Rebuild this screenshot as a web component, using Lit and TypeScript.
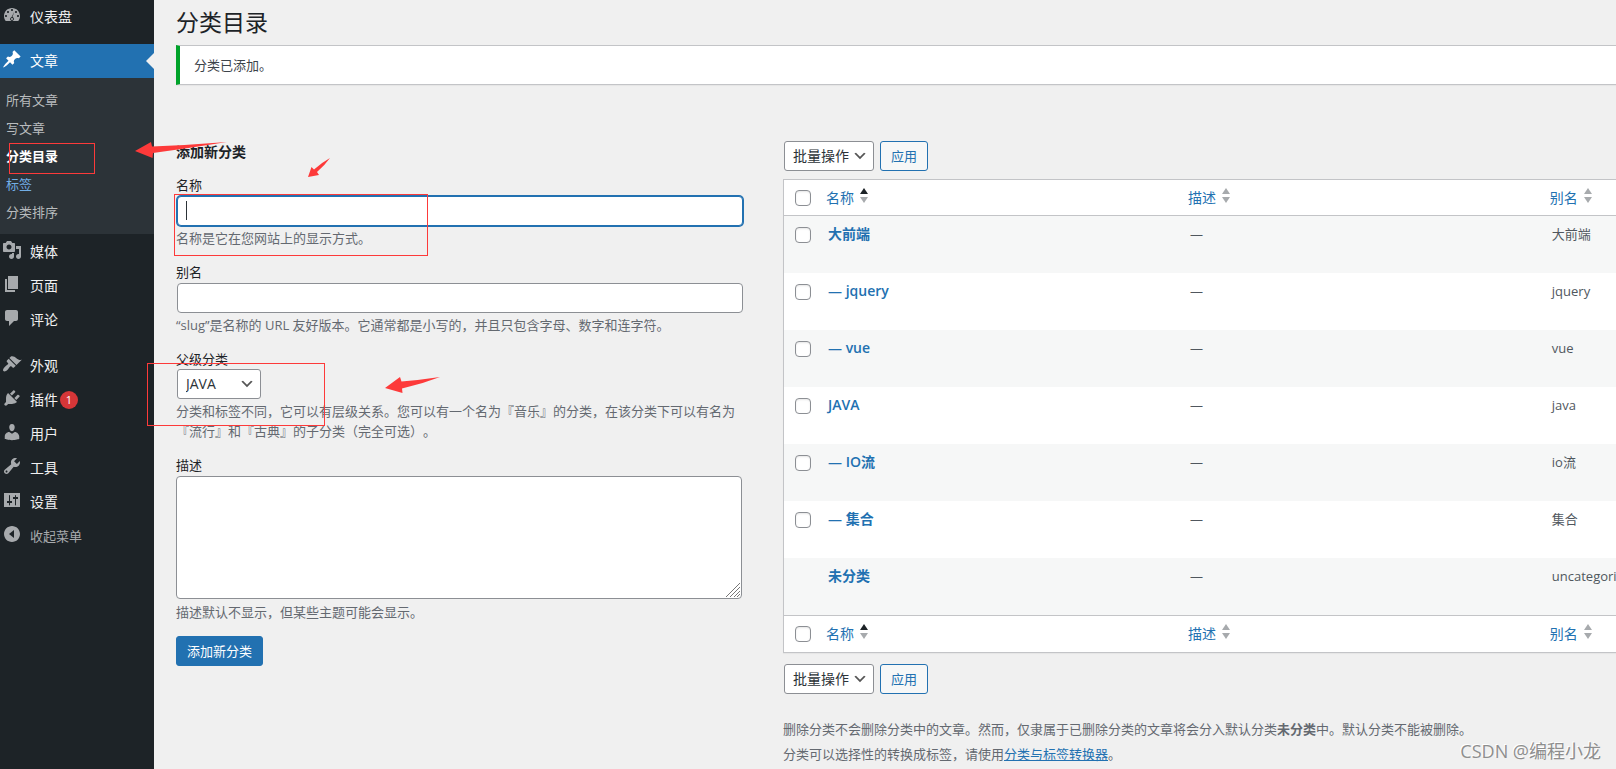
import { LitElement, html, css, svg, nothing } from "lit";
import { customElement, property } from "lit/decorators.js";
import { classMap } from "lit/directives/class-map.js";

const icons: Record<string, string> = {
  dashboard:
    "M3.76 16h12.48c1.1-1.37 1.76-3.11 1.76-5 0-4.42-3.58-8-8-8s-8 3.58-8 8c0 1.89.66 3.63 1.76 5zM10 4c.55 0 1 .45 1 1s-.45 1-1 1-1-.45-1-1 .45-1 1-1zM6 6c.55 0 1 .45 1 1s-.45 1-1 1-1-.45-1-1 .45-1 1-1zm8 0c.55 0 1 .45 1 1s-.45 1-1 1-1-.45-1-1 .45-1 1-1zm-1.6 .5l-2 5.6c.9.2 1.5 1 1.5 1.9 0 1.1-.9 1.9-1.9 1.9s-1.9-.9-1.9-1.9c0-.9.6-1.6 1.4-1.8zM4 10c.55 0 1 .45 1 1s-.45 1-1 1-1-.45-1-1 .45-1 1-1zm12 0c.55 0 1 .45 1 1s-.45 1-1 1-1-.45-1-1 .45-1 1-1zm-5 4c0-.55-.45-1-1-1s-1 .45-1 1 .45 1 1 1 1-.45 1-1z",
  pin: "M10.44 3.02l1.82-1.82 6.36 6.35-1.83 1.82c-1.05-.68-2.48-.57-3.41.36l-.75.75c-.92.93-1.04 2.35-.35 3.41l-1.83 1.82-2.41-2.41-2.8 2.79c-.42.42-3.38 2.71-3.8 2.29s1.86-3.39 2.28-3.81l2.79-2.79L4.1 9.36l1.83-1.82c1.05.69 2.48.57 3.4-.36l.75-.75c.93-.92 1.05-2.35.36-3.41z",
  media:
    "M13 11V4c0-.55-.45-1-1-1h-1.67L9 1H5L3.67 3H2c-.55 0-1 .45-1 1v7c0 .55.45 1 1 1h10c.55 0 1-.45 1-1zM7 4.5c1.38 0 2.5 1.12 2.5 2.5S8.38 9.5 7 9.5 4.5 8.38 4.5 7 5.62 4.5 7 4.5zM14 6h5v10.5c0 1.38-1.12 2.5-2.5 2.5S14 17.88 14 16.5s1.12-2.5 2.5-2.5c.17 0 .34.02.5.05V9h-3V6zm-4 8.05V13h2v3.5c0 1.38-1.12 2.5-2.5 2.5S7 17.88 7 16.5 8.12 14 9.5 14c.17 0 .34.02.5.05z",
  page: "M6 15V2h10v13H6zm-1 1h8v2H3V5h2v11z",
  comment:
    "M5 2h9c1.1 0 2 .9 2 2v7c0 1.1-.9 2-2 2h-2l-5 5v-5H5c-1.1 0-2-.9-2-2V4c0-1.1.9-2 2-2z",
  brush:
    "M14.48 11.06L7.41 3.99l1.5-1.5c.5-.56 2.3-.47 3.51.32 1.21.8 1.43 1.28 2.91 2.1 1.18.64 2.45 1.26 4.45.85zm-.71.71L6.7 4.7 4.93 6.47c-.39.39-.39 1.02 0 1.41l1.06 1.06c.39.39.39 1.03 0 1.42-.6.6-1.43 1.11-2.21 1.69-.35.26-.7.53-1.01.84C1.43 14.23.4 16.08 1.4 17.07c.99 1 2.84-.03 4.18-1.36.31-.31.58-.66.85-1.02.57-.78 1.08-1.61 1.69-2.21.39-.39 1.02-.39 1.41 0l1.06 1.06c.39.39 1.02.39 1.41 0z",
  plug: "M13.11 4.36L9.87 7.6 8 5.73l3.24-3.24c.35-.34 1.05-.2 1.56.32.52.51.66 1.21.31 1.55zm-8 1.77l.91-1.12 9.01 9.01-1.19.84c-.71.71-2.63 1.16-3.82 1.16H6.14L4.9 17.26c-.59.59-1.54.59-2.12 0-.59-.58-.59-1.53 0-2.12l1.24-1.24v-3.88c0-1.13.4-3.19 1.09-3.89zm7.26 3.97l3.24-3.24c.34-.35 1.04-.21 1.55.31.52.51.66 1.21.31 1.55l-3.24 3.25z",
  user: "M10 9.25c-2.27 0-2.73-3.44-2.73-3.44C7 4.02 7.82 2 9.97 2c2.16 0 2.98 2.02 2.71 3.81 0 0-.41 3.44-2.68 3.44zm0 2.57L12.72 10c2.39 0 4.52 2.33 4.52 4.53v2.49s-3.65 1.13-7.24 1.13c-3.65 0-7.24-1.13-7.24-1.13v-2.49c0-2.25 1.94-4.48 4.47-4.48z",
  wrench:
    "M16.68 9.77c-1.34 1.34-3.3 1.67-4.95.99l-5.41 6.52c-.99.99-2.59.99-3.58 0s-.99-2.59 0-3.57l6.52-5.42c-.68-1.65-.35-3.61.99-4.95 1.28-1.28 3.12-1.62 4.72-1.06l-2.89 2.89 2.82 2.82 2.86-2.87c.53 1.58.18 3.39-1.08 4.65zM3.81 16.21c.4.39 1.04.39 1.43 0 .4-.4.4-1.04 0-1.43-.39-.4-1.03-.4-1.43 0-.39.39-.39 1.03 0 1.43z",
  sliders:
    "M18 17V3H2v14h16zM7.5 5c.3 0 .5.2.5.5V11h2v2H8v2c0 .3-.2.5-.5.5S7 15.3 7 15v-2H5v-2h2V5.5c0-.3.2-.5.5-.5zm6 0c.3 0 .5.2.5.5V7h2v2h-2v6c0 .3-.2.5-.5.5S13 15.3 13 15V9h-2V7h2V5.5c0-.3.2-.5.5-.5z",
  collapse:
    "M10 2c4.42 0 8 3.58 8 8s-3.58 8-8 8-8-3.58-8-8 3.58-8 8-8zm2 12V6l-5 4z",
};

const base = css`
  *,
  *::before,
  *::after {
    box-sizing: border-box;
  }
  a {
    color: #2271b1;
    text-decoration: none;
  }
  button,
  input,
  select,
  textarea {
    font-family: inherit;
    margin: 0;
  }
`;

const controls = css`
  .select {
    position: relative;
    display: inline-flex;
  }
  .select select {
    appearance: none;
    height: 30px;
    padding: 0 24px 0 8px;
    border: 1px solid #8c8f94;
    border-radius: 3px;
    background: #fff;
    color: #2c3338;
    font-size: 14px;
    line-height: 28px;
  }
  .select svg {
    position: absolute;
    right: 6px;
    top: 7px;
    width: 16px;
    height: 16px;
    pointer-events: none;
  }
`;

const chevron = html`<svg viewBox="0 0 20 20" aria-hidden="true">
  <path d="M5 6l5 5 5-5 2 1-7 7-7-7 2-1z" fill="#555" />
</svg>`;

interface MenuEntry {
  icon: string;
  label: string;
  count?: number;
}

@customElement("admin-menu")
class AdminMenu extends LitElement {
  static styles = [
    base,
    css`
      :host {
        display: block;
        background: #1d2327;
      }
      ul {
        list-style: none;
        margin: 0;
        padding: 0;
      }
      .group {
        margin-bottom: 12px;
      }
      .group.first {
        margin-bottom: 10px;
      }
      .item {
        position: relative;
        display: flex;
        align-items: center;
        gap: 8px;
        width: 100%;
        height: 34px;
        padding: 0 0 0 2px;
        border: 0;
        background: none;
        color: #f0f0f1;
        font-size: 14px;
        line-height: 20px;
        text-align: left;
      }
      .item svg {
        width: 20px;
        height: 20px;
        margin-bottom: 4px;
        fill: #a7aaad;
      }
      .current {
        background: #2271b1;
        color: #fff;
      }
      .current svg {
        fill: #fff;
      }
      .current::after {
        content: "";
        position: absolute;
        right: 0;
        top: 9px;
        border: 8px solid transparent;
        border-left-width: 0;
        border-right-color: #f0f0f0;
      }
      .label {
        display: flex;
        align-items: center;
        gap: 2px;
      }
      .count {
        min-width: 18px;
        height: 18px;
        border-radius: 9px;
        background: #d63638;
        color: #fff;
        font-size: 11px;
        line-height: 18px;
        text-align: center;
      }
      .sub {
        margin-bottom: 1px;
        padding: 8px 0;
        background: #2c3338;
      }
      .sub a {
        display: block;
        padding: 4px 6px;
        color: #b9bcbe;
        font-size: 13px;
        line-height: 20px;
      }
      .sub a.here {
        color: #fff;
        font-weight: 600;
      }
      .sub a.hover {
        color: #72aee6;
      }
      .collapse {
        color: #a7aaad;
        font-size: 13px;
      }
    `,
  ];

  private link({ icon, label, count }: MenuEntry, current = false) {
    return html`<a href="#" class=${classMap({ item: true, current })}>
      <svg viewBox="0 0 20 20" aria-hidden="true"><path fill-rule="evenodd" d=${icons[icon]} /></svg>
      <span class="label"
        >${label}${count ? html`<span class="count">${count}</span>` : nothing}</span
      >
    </a>`;
  }

  private group(entries: MenuEntry[]) {
    return entries.map((e) => html`<li>${this.link(e)}</li>`);
  }

  render() {
    return html`<nav>
      <ul class="group first">
        ${this.group([{ icon: "dashboard", label: "仪表盘" }])}
      </ul>
      <ul class="group">
        <li>
          ${this.link({ icon: "pin", label: "文章" }, true)}
          <ul class="sub">
            <li><a href="#">所有文章</a></li>
            <li><a href="#">写文章</a></li>
            <li><a href="#" class="here">分类目录</a></li>
            <li><a href="#" class="hover">标签</a></li>
            <li><a href="#">分类排序</a></li>
          </ul>
        </li>
        ${this.group([
          { icon: "media", label: "媒体" },
          { icon: "page", label: "页面" },
          { icon: "comment", label: "评论" },
        ])}
      </ul>
      <ul>
        ${this.group([
          { icon: "brush", label: "外观" },
          { icon: "plug", label: "插件", count: 1 },
          { icon: "user", label: "用户" },
          { icon: "wrench", label: "工具" },
          { icon: "sliders", label: "设置" },
        ])}
        <li>
          <button type="button" class="item collapse">
            <svg viewBox="0 0 20 20" aria-hidden="true"><path fill-rule="evenodd" d=${icons.collapse} /></svg>
            收起菜单
          </button>
        </li>
      </ul>
    </nav>`;
  }
}

@customElement("category-form")
class CategoryForm extends LitElement {
  static styles = [
    base,
    controls,
    css`
      :host {
        display: block;
      }
      h2 {
        margin: 0 0 13px;
        padding-top: 1px;
        color: #1d2327;
        font-size: 14px;
        font-weight: 600;
        line-height: 20px;
      }
      .field {
        margin-bottom: 14px;
      }
      label {
        display: block;
        color: #1d2327;
        line-height: 20px;
      }
      .box {
        position: relative;
        margin: 1px;
      }
      .box input {
        display: block;
        width: 100%;
        height: 30px;
        padding: 0 8px;
        border: 1px solid #8c8f94;
        border-radius: 4px;
        background: #fff;
        font-size: 14px;
      }
      .focused input {
        border-color: #2271b1;
        box-shadow: 0 0 0 1px #2271b1;
      }
      .caret {
        position: absolute;
        left: 9px;
        top: 5px;
        width: 1px;
        height: 19px;
        background: #2c3338;
      }
      .select {
        display: flex;
        width: max-content;
        margin: 0 1px;
      }
      .select select {
        width: 84px;
      }
      .area {
        position: relative;
        margin: 1px 2px 3px 0;
      }
      textarea {
        display: block;
        width: 100%;
        height: 123px;
        border: 1px solid #8c8f94;
        border-radius: 4px;
        background: #fff;
        font-size: 14px;
        resize: none;
      }
      .grip {
        position: absolute;
        right: 2px;
        bottom: 2px;
        width: 14px;
        height: 14px;
        stroke: #777;
        pointer-events: none;
      }
      p {
        margin: 2px 0 0;
        color: #646970;
        line-height: 20px;
      }
      .submit {
        height: 30px;
        padding: 0 10px;
        border: 1px solid #2271b1;
        border-radius: 3px;
        background: #2271b1;
        color: #fff;
        font-size: 13px;
        line-height: 28px;
      }
    `,
  ];

  render() {
    return html`<form @submit=${(e: Event) => e.preventDefault()}>
      <h2>添加新分类</h2>
      <div class="field">
        <label for="name">名称</label>
        <div class="box focused">
          <input id="name" type="text" />
          <span class="caret"></span>
        </div>
        <p>名称是它在您网站上的显示方式。</p>
      </div>
      <div class="field">
        <label for="slug">别名</label>
        <div class="box"><input id="slug" type="text" /></div>
        <p>“slug”是名称的 URL 友好版本。它通常都是小写的，并且只包含字母、数字和连字符。</p>
      </div>
      <div class="field">
        <label for="parent">父级分类</label>
        <div class="select">
          <select id="parent">
            <option>JAVA</option>
          </select>
          ${chevron}
        </div>
        <p>
          分类和标签不同，它可以有层级关系。您可以有一个名为『音乐』的分类，在该分类下可以有名为『流行』和『古典』的子分类（完全可选）。
        </p>
      </div>
      <div class="field">
        <label for="description">描述</label>
        <div class="area">
          <textarea id="description"></textarea>
          <svg class="grip" viewBox="0 0 14 14" aria-hidden="true">
            <path d="M0 14L14 0M4 14L14 4M8 14L14 8M11 14L14 11" />
          </svg>
        </div>
        <p>描述默认不显示，但某些主题可能会显示。</p>
      </div>
      <button class="submit" type="submit">添加新分类</button>
    </form>`;
  }
}

interface Category {
  name: string;
  slug: string;
  fixed?: boolean;
}

@customElement("category-table")
class CategoryTable extends LitElement {
  @property({ attribute: false }) rows: Category[] = [
    { name: "大前端", slug: "大前端" },
    { name: "— jquery", slug: "jquery" },
    { name: "— vue", slug: "vue" },
    { name: "JAVA", slug: "java" },
    { name: "— IO流", slug: "io流" },
    { name: "— 集合", slug: "集合" },
    { name: "未分类", slug: "uncategorized", fixed: true },
  ];

  static styles = [
    base,
    controls,
    css`
      :host {
        display: block;
        min-width: 0;
      }
      .bulk {
        display: flex;
        gap: 6px;
        padding-left: 1px;
      }
      .bulk select {
        width: 90px;
      }
      .apply {
        height: 30px;
        padding: 0 10px;
        border: 1px solid #2271b1;
        border-radius: 3px;
        background: #f6f7f7;
        color: #2271b1;
        font-size: 13px;
        line-height: 28px;
      }
      table {
        width: 100%;
        margin: 8px 0 11px;
        table-layout: fixed;
        border-collapse: separate;
        border-spacing: 0;
        border: 1px solid #c3c4c7;
        border-right: 0;
        background: #fff;
        box-shadow: 0 1px 1px rgba(0, 0, 0, 0.04);
      }
      .check {
        width: 34px;
        padding: 0 0 0 11px;
      }
      .wide {
        width: 43.5%;
      }
      th,
      td {
        padding: 8px 10px;
        text-align: left;
        font-weight: 400;
        white-space: nowrap;
      }
      thead th {
        height: 36px;
        padding-top: 0;
        padding-bottom: 0;
        border-bottom: 1px solid #c3c4c7;
      }
      tfoot th {
        height: 37px;
        padding-top: 0;
        padding-bottom: 0;
        border-top: 1px solid #c3c4c7;
      }
      th {
        padding-left: 8px;
      }
      .sort {
        display: flex;
        align-items: center;
        gap: 6px;
        font-size: 14px;
        line-height: 20px;
      }
      .sort svg {
        width: 8px;
        height: 15px;
        margin-bottom: 5px;
        fill: #a7aaad;
      }
      .sort .on {
        fill: #1d2327;
      }
      tbody td {
        height: 57px;
        vertical-align: top;
        color: #50575e;
        line-height: 20px;
      }
      tbody tr:nth-child(odd) {
        background: #f6f7f7;
      }
      tbody .check {
        padding-top: 11px;
      }
      .title {
        font-size: 14px;
        font-weight: 600;
      }
      input {
        display: block;
        appearance: none;
        width: 16px;
        height: 16px;
        border: 1px solid #8c8f94;
        border-radius: 4px;
        background: #fff;
        box-shadow: inset 0 1px 2px rgba(0, 0, 0, 0.1);
      }
      .notes {
        display: grid;
        gap: 5px;
        margin-top: 25px;
        color: #646970;
        line-height: 20px;
      }
      .notes p {
        margin: 0;
      }
      .notes a {
        text-decoration: underline;
      }
      strong {
        font-weight: 600;
      }
    `,
  ];

  private bulk(place: string) {
    return html`<div class="bulk">
      <div class="select">
        <select aria-label=${"批量操作 " + place}>
          <option>批量操作</option>
        </select>
        ${chevron}
      </div>
      <button type="button" class="apply">应用</button>
    </div>`;
  }

  private sort(label: string, on = false) {
    return html`<a href="#" class="sort"
      >${label}<svg viewBox="0 0 8 15" aria-hidden="true">
        ${svg`<path class=${on ? "on" : ""} d="M4 0l4 6H0z"/><path d="M0 9h8l-4 6z"/>`}
      </svg></a
    >`;
  }

  private heading() {
    return html`<tr>
      <th class="check"><input type="checkbox" aria-label="全选" /></th>
      <th class="wide">${this.sort("名称", true)}</th>
      <th class="wide">${this.sort("描述")}</th>
      <th>${this.sort("别名")}</th>
    </tr>`;
  }

  render() {
    return html`
      ${this.bulk("top")}
      <table>
        <thead>
          ${this.heading()}
        </thead>
        <tbody>
          ${this.rows.map(
            (r) => html`<tr>
              <td class="check">
                ${r.fixed ? nothing : html`<input type="checkbox" aria-label=${r.name} />`}
              </td>
              <td><a href="#" class="title">${r.name}</a></td>
              <td>—</td>
              <td>${r.slug}</td>
            </tr>`,
          )}
        </tbody>
        <tfoot>
          ${this.heading()}
        </tfoot>
      </table>
      ${this.bulk("bottom")}
      <div class="notes">
        <p>
          删除分类不会删除分类中的文章。然而，仅隶属于已删除分类的文章将会分入默认分类<strong>未分类</strong>中。默认分类不能被删除。
        </p>
        <p>分类可以选择性的转换成标签，请使用<a href="#">分类与标签转换器</a>。</p>
      </div>
    `;
  }
}

@customElement("app-root")
class AppRoot extends LitElement {
  static styles = [
    base,
    css`
      :host {
        position: relative;
        display: grid;
        grid-template-columns: 154px minmax(0, 1fr);
        min-height: 100vh;
        overflow: hidden;
        background: #f0f0f0;
        color: #3c434a;
        font-family: "Open Sans", "Noto Sans CJK SC", sans-serif;
        font-size: 13px;
        text-spacing-trim: space-all;
      }
      main {
        padding: 7px 0 0 22px;
      }
      h1 {
        margin: 0 0 8px;
        color: #1d2327;
        font-size: 23px;
        font-weight: 400;
        line-height: 30px;
      }
      .notice {
        margin-bottom: 56px;
        padding: 9px 14px;
        border: 1px solid #c3c4c7;
        border-left: 4px solid #00a32a;
        border-right: 0;
        background: #fff;
        box-shadow: 0 1px 1px rgba(0, 0, 0, 0.04);
        line-height: 20px;
      }
      .columns {
        display: grid;
        grid-template-columns: 607fr 833fr;
      }
      .columns category-form {
        padding-right: 39px;
      }
      .marks {
        position: absolute;
        left: 0;
        top: 0;
        width: 460px;
        height: 440px;
        pointer-events: none;
      }
      .watermark {
        position: absolute;
        right: 15px;
        bottom: 6px;
        color: #8e8e8e;
        font-size: 18px;
        line-height: 24px;
        text-shadow: -1px -1px 0 #fff;
        pointer-events: none;
      }
    `,
  ];

  render() {
    return html`
      <admin-menu></admin-menu>
      <main>
        <h1>分类目录</h1>
        <div class="notice" role="status">分类已添加。</div>
        <div class="columns">
          <category-form></category-form>
          <category-table></category-table>
        </div>
      </main>
      <svg class="marks" viewBox="0 0 460 440" aria-hidden="true">
        <g fill="none" stroke="#fd3a3a">
          <rect x="9.5" y="143.5" width="85" height="30" />
          <rect x="174.5" y="194.5" width="253" height="61" />
          <rect x="147.5" y="363.5" width="177" height="62" />
        </g>
        <g fill="#fd3a3a">
          <path d="M135 151L151 142L152 146.5Q190 145 227 142Q190 148 153 153L152.5 158Z" />
          <path d="M308 177L311.5 167L314 169.5Q321 163 330 158Q325 165 317 172L319 175Z" />
          <path d="M385 388L400 377L401.5 381.5Q420 380 440 377Q422 384 402 388.5L402.5 393Z" />
        </g>
      </svg>
      <span class="watermark">CSDN @编程小龙</span>
    `;
  }
}
